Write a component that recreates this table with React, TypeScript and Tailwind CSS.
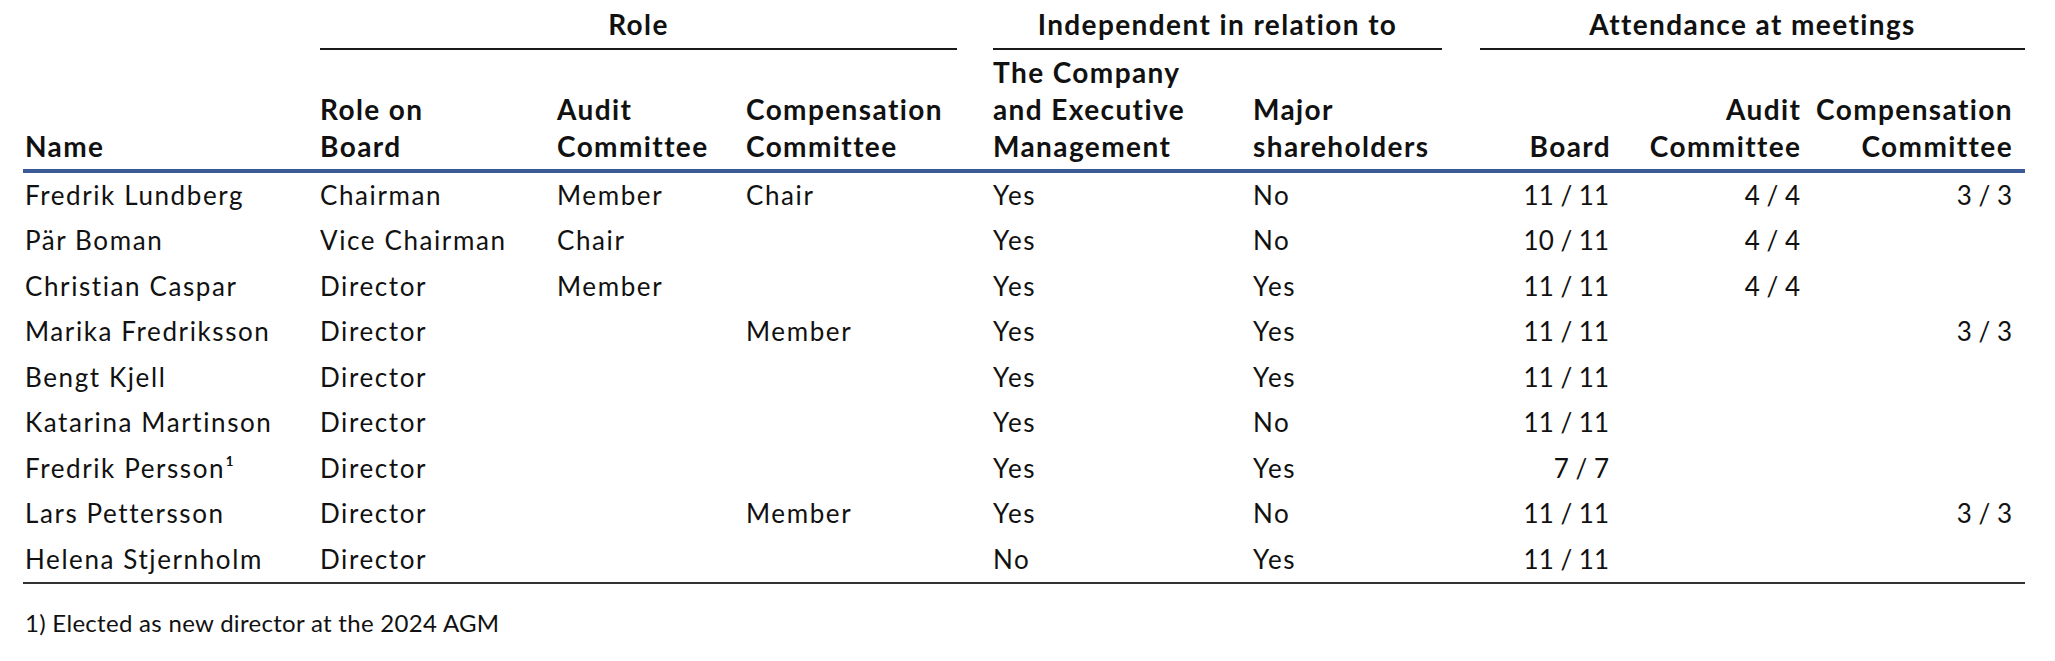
import React from "react";

type Row = string[];

const rows: Row[] = [
  ["Fredrik Lundberg", "Chairman", "Member", "Chair", "Yes", "No", "11 / 11", "4 / 4", "3 / 3"],
  ["Pär Boman", "Vice Chairman", "Chair", "", "Yes", "No", "10 / 11", "4 / 4", ""],
  ["Christian Caspar", "Director", "Member", "", "Yes", "Yes", "11 / 11", "4 / 4", ""],
  ["Marika Fredriksson", "Director", "", "Member", "Yes", "Yes", "11 / 11", "", "3 / 3"],
  ["Bengt Kjell", "Director", "", "", "Yes", "Yes", "11 / 11", "", ""],
  ["Katarina Martinson", "Director", "", "", "Yes", "No", "11 / 11", "", ""],
  ["Fredrik Persson¹", "Director", "", "", "Yes", "Yes", "7 / 7", "", ""],
  ["Lars Pettersson", "Director", "", "Member", "Yes", "No", "11 / 11", "", "3 / 3"],
  ["Helena Stjernholm", "Director", "", "", "No", "Yes", "11 / 11", "", ""],
];

const headCell = [
  "pl-[2px] text-left",
  "text-left",
  "text-left",
  "text-left",
  "text-left",
  "text-left",
  "text-right mr-[-1px]",
  "text-right mr-[-1.4px]",
  "text-right pr-[12px]",
];

const dataCell = [
  "pl-[2px] text-left tracking-[1.6px]",
  "text-left tracking-[1.6px]",
  "text-left tracking-[1.6px]",
  "text-left tracking-[1.6px]",
  "text-left tracking-[1.6px]",
  "text-left tracking-[1.6px]",
  "text-right pr-[1px]",
  "text-right",
  "text-right pr-[13px]",
];

const gridCols =
  "grid grid-cols-[297px_237px_189px_247px_260px_227px_130px_190px_225px]";

export default function App() {
  return (
    <div className="w-[2055px] h-[661px] bg-white text-[#111] font-['Lato',sans-serif] overflow-hidden">
      <div className="ml-[23px] w-[2002px]">
        {/* Group titles */}
        <div
          className={`${gridCols} pt-[6px] text-[28px] leading-[36px] font-bold tracking-[1.4px]`}
        >
          <div />
          <div className="col-span-3 mr-[36px] flex flex-col">
            <div className="text-center">Role</div>
            <div className="mt-[6px] h-[1.5px] bg-[#1a1a1a]" />
          </div>
          <div className="col-span-2 mr-[38px] flex flex-col">
            <div className="text-center">Independent in relation to</div>
            <div className="mt-[6px] h-[1.5px] bg-[#1a1a1a]" />
          </div>
          <div className="col-span-3 flex flex-col">
            <div className="text-center">Attendance at meetings</div>
            <div className="mt-[6px] h-[1.5px] bg-[#1a1a1a]" />
          </div>
        </div>

        {/* Column headers */}
        <div
          className={`${gridCols} items-end mt-[4px] pb-[4px] text-[28px] leading-[37px] font-bold tracking-[1.4px] whitespace-nowrap`}
        >
          <div className={headCell[0]}>Name</div>
          <div className={headCell[1]}>
            Role on
            <br />
            Board
          </div>
          <div className={headCell[2]}>
            Audit
            <br />
            Committee
          </div>
          <div className={headCell[3]}>
            Compensation
            <br />
            Committee
          </div>
          <div className={headCell[4]}>
            The Company
            <br />
            and Executive
            <br />
            Management
          </div>
          <div className={headCell[5]}>
            Major
            <br />
            shareholders
          </div>
          <div className={headCell[6]}>Board</div>
          <div className={headCell[7]}>
            Audit
            <br />
            Committee
          </div>
          <div className={headCell[8]}>
            Compensation
            <br />
            Committee
          </div>
        </div>

        <div className="h-[4px] bg-[#3b5b97]" />

        {/* Data rows */}
        <div className="text-[26px] leading-[45.5px] whitespace-nowrap">
          {rows.map((r, i) => (
            <div key={i} className={gridCols}>
              {r.map((c, j) => (
                <div key={j} className={dataCell[j]}>
                  {c}
                </div>
              ))}
            </div>
          ))}
        </div>

        <div className="h-[2px] bg-[#333]" />

        <div className="mt-[21px] pl-[2px] text-[24px] leading-[36px] tracking-[0.3px]">
          1) Elected as new director at the 2024 AGM
        </div>
      </div>
    </div>
  );
}
